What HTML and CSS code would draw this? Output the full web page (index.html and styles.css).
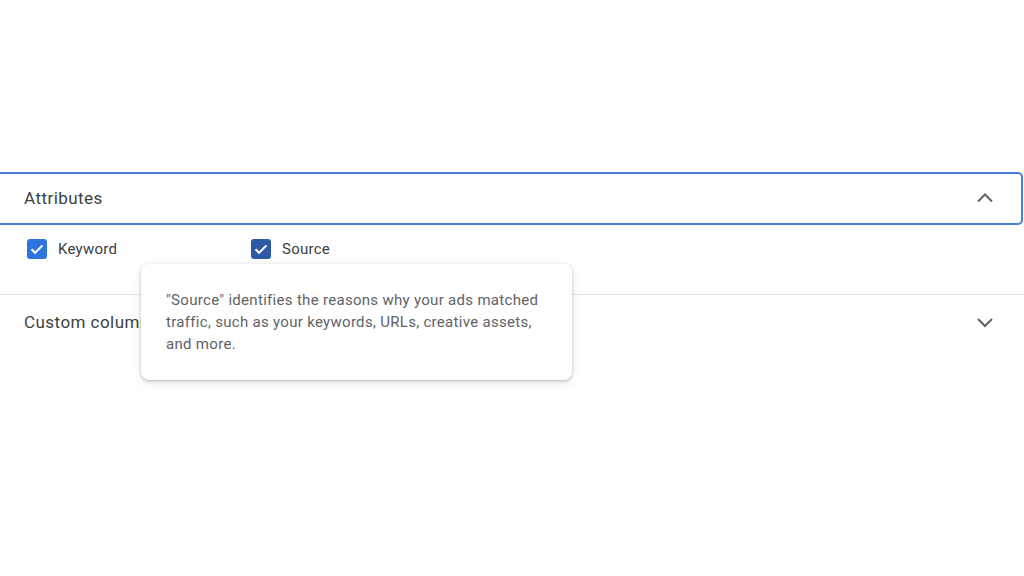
FILE: index.html
```html
<!DOCTYPE html>
<html lang="en">
<head>
    <meta charset="UTF-8">
    <meta name="viewport" content="width=device-width, initial-scale=1.0">
    <title>Columns - Attributes</title>
    <link rel="stylesheet" href="styles.css">
</head>
<body>
    <div class="panel">
        <!-- Attributes section (expanded) -->
        <div class="section-header active">
            <span class="section-title">Attributes</span>
            <svg class="chevron" width="24" height="24" viewBox="0 0 24 24"><path d="M5 15.5l7-7 7 7" fill="none" stroke="#5f6368" stroke-width="2"/></svg>
        </div>
        <div class="options">
            <label class="option">
                <span class="checkbox"><svg width="20" height="20" viewBox="0 0 20 20"><path d="M4.5 10.2l3.6 3.6 7.4-7.4" fill="none" stroke="#fff" stroke-width="2"/></svg></span>
                Keyword
            </label>
            <label class="option">
                <span class="checkbox hover"><svg width="20" height="20" viewBox="0 0 20 20"><path d="M4.5 10.2l3.6 3.6 7.4-7.4" fill="none" stroke="#fff" stroke-width="2"/></svg></span>
                Source
            </label>
        </div>

        <!-- Custom columns section (collapsed) -->
        <div class="section-header">
            <span class="section-title">Custom columns</span>
            <svg class="chevron" width="24" height="24" viewBox="0 0 24 24"><path d="M5 9l7 7 7-7" fill="none" stroke="#5f6368" stroke-width="2"/></svg>
        </div>

        <div class="tooltip">
            "Source" identifies the reasons why your ads matched traffic, such as your keywords, URLs, creative assets, and more.
        </div>
    </div>
</body>
</html>
```

FILE: styles.css
```css
html, body {
    height: 100%;
}
body {
    margin: 0;
    font-family: Roboto, "Liberation Sans", Arial, sans-serif;
    color: #3c4043;
    background: #fff;
}
.panel {
    position: relative;
    min-height: 100%;
    padding-top: 172px;
    box-sizing: border-box;
}
.section-header {
    display: flex;
    align-items: center;
    justify-content: space-between;
    height: 55px;
    padding: 0 27px 0 24px;
    border-top: 1px solid #e3e3e3;
    box-sizing: border-box;
}
.section-header.active {
    height: 53px;
    margin-right: 1px;
    padding-bottom: 1px;
    border: 2px solid #4a7fd8;
    border-left: none;
    border-radius: 0 5px 5px 0;
    padding-right: 24px;
}
.section-title {
    font-size: 17px;
    letter-spacing: 0.45px;
}
.chevron {
    display: block;
}
.options {
    display: grid;
    grid-template-columns: 224px 224px;
    padding: 14px 0 0 27px;
    height: 69px;
    box-sizing: border-box;
}
.option {
    display: flex;
    align-items: flex-start;
    gap: 11px;
    font-size: 15px;
    letter-spacing: 0.25px;
    line-height: 20px;
    color: #3c4043;
}
.checkbox {
    width: 20px;
    height: 20px;
    border-radius: 3px;
    background: #2f74dd;
    flex-shrink: 0;
}
.checkbox.hover {
    background: #2c5aa6;
}
.checkbox svg {
    display: block;
}
.tooltip {
    position: absolute;
    z-index: 2;
    left: 141px;
    top: 264px;
    width: 431px;
    box-sizing: border-box;
    padding: 25px 25px;
    background: #fff;
    border-radius: 8px;
    box-shadow: 0 1px 3px rgba(60, 64, 67, 0.3), 0 3px 8px rgba(60, 64, 67, 0.12);
    font-size: 15px;
    letter-spacing: 0.3px;
    line-height: 22px;
    color: #5f6368;
}
```
